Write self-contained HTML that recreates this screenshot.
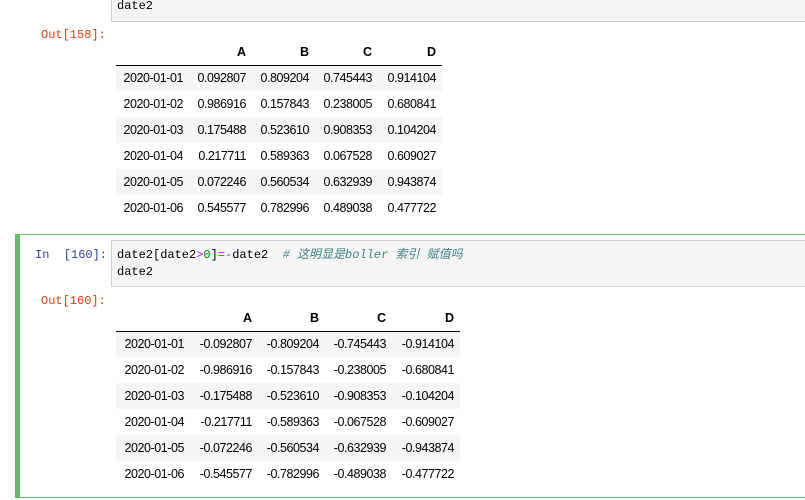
<!DOCTYPE html>
<html><head><meta charset="utf-8"><style>
body{margin:0;width:805px;height:500px;background:#fff;position:relative;overflow:hidden;font-family:"Liberation Sans",Arial,sans-serif}
.abs{position:absolute}
.mono{font-family:"Liberation Mono","Noto Sans CJK SC",monospace;font-size:12px;line-height:17px;white-space:pre}
.inbox{background:#f5f5f5;border:1px solid #cfcfcf;box-sizing:border-box}
.out{color:#D84315}
.inp{color:#303F9F}
table{border-collapse:collapse;font-size:12.5px;letter-spacing:-0.45px;color:#000}
td,th{padding:0 6px 0 0;text-align:right;height:26px;box-sizing:border-box}
th{font-weight:bold;height:26px;letter-spacing:0}
thead tr{border-bottom:1px solid #000}
tbody tr:nth-child(odd){background:#f5f5f5}
</style></head><body>
<div class="abs inbox" style="left:111px;top:-10px;width:700px;height:32px"></div>
<div class="abs mono" style="left:117px;top:-2px">date2</div>
<div class="abs mono out" style="left:41px;top:27px">Out[158]:</div>
<table class="abs" style="left:116px;top:39px;width:326px">
<colgroup><col style="width:73px"><col style="width:63px"><col style="width:63px"><col style="width:63px"><col style="width:64px"></colgroup>
<thead><tr><th></th><th>A</th><th>B</th><th>C</th><th>D</th></tr></thead>
<tbody>
<tr><td>2020-01-01</td><td>0.092807</td><td>0.809204</td><td>0.745443</td><td>0.914104</td></tr>
<tr><td>2020-01-02</td><td>0.986916</td><td>0.157843</td><td>0.238005</td><td>0.680841</td></tr>
<tr><td>2020-01-03</td><td>0.175488</td><td>0.523610</td><td>0.908353</td><td>0.104204</td></tr>
<tr><td>2020-01-04</td><td>0.217711</td><td>0.589363</td><td>0.067528</td><td>0.609027</td></tr>
<tr><td>2020-01-05</td><td>0.072246</td><td>0.560534</td><td>0.632939</td><td>0.943874</td></tr>
<tr><td>2020-01-06</td><td>0.545577</td><td>0.782996</td><td>0.489038</td><td>0.477722</td></tr>
</tbody></table>

<div class="abs" style="left:15px;top:234px;width:800px;height:264px;border:1px solid #66BB6A;border-left:5px solid #66BB6A;box-sizing:border-box"></div>
<div class="abs inbox" style="left:111px;top:240px;width:700px;height:47px"></div>
<div class="abs mono inp" style="left:35px;top:247px">In  [160]:</div>
<div class="abs mono" style="left:117px;top:247px">date2[date2<span style="color:#AA22FF">&gt;</span><span style="color:#008000">0</span>]<span style="color:#AA22FF">=-</span>date2  <i style="color:#408080"># 这明显是boller 索引 赋值吗</i>
date2</div>
<div class="abs mono out" style="left:41px;top:293px">Out[160]:</div>
<table class="abs" style="left:116px;top:305px;width:344px">
<colgroup><col style="width:74px"><col style="width:68px"><col style="width:67px"><col style="width:67px"><col style="width:68px"></colgroup>
<thead><tr><th></th><th>A</th><th>B</th><th>C</th><th>D</th></tr></thead>
<tbody>
<tr><td>2020-01-01</td><td>-0.092807</td><td>-0.809204</td><td>-0.745443</td><td>-0.914104</td></tr>
<tr><td>2020-01-02</td><td>-0.986916</td><td>-0.157843</td><td>-0.238005</td><td>-0.680841</td></tr>
<tr><td>2020-01-03</td><td>-0.175488</td><td>-0.523610</td><td>-0.908353</td><td>-0.104204</td></tr>
<tr><td>2020-01-04</td><td>-0.217711</td><td>-0.589363</td><td>-0.067528</td><td>-0.609027</td></tr>
<tr><td>2020-01-05</td><td>-0.072246</td><td>-0.560534</td><td>-0.632939</td><td>-0.943874</td></tr>
<tr><td>2020-01-06</td><td>-0.545577</td><td>-0.782996</td><td>-0.489038</td><td>-0.477722</td></tr>
</tbody></table>
</body></html>
